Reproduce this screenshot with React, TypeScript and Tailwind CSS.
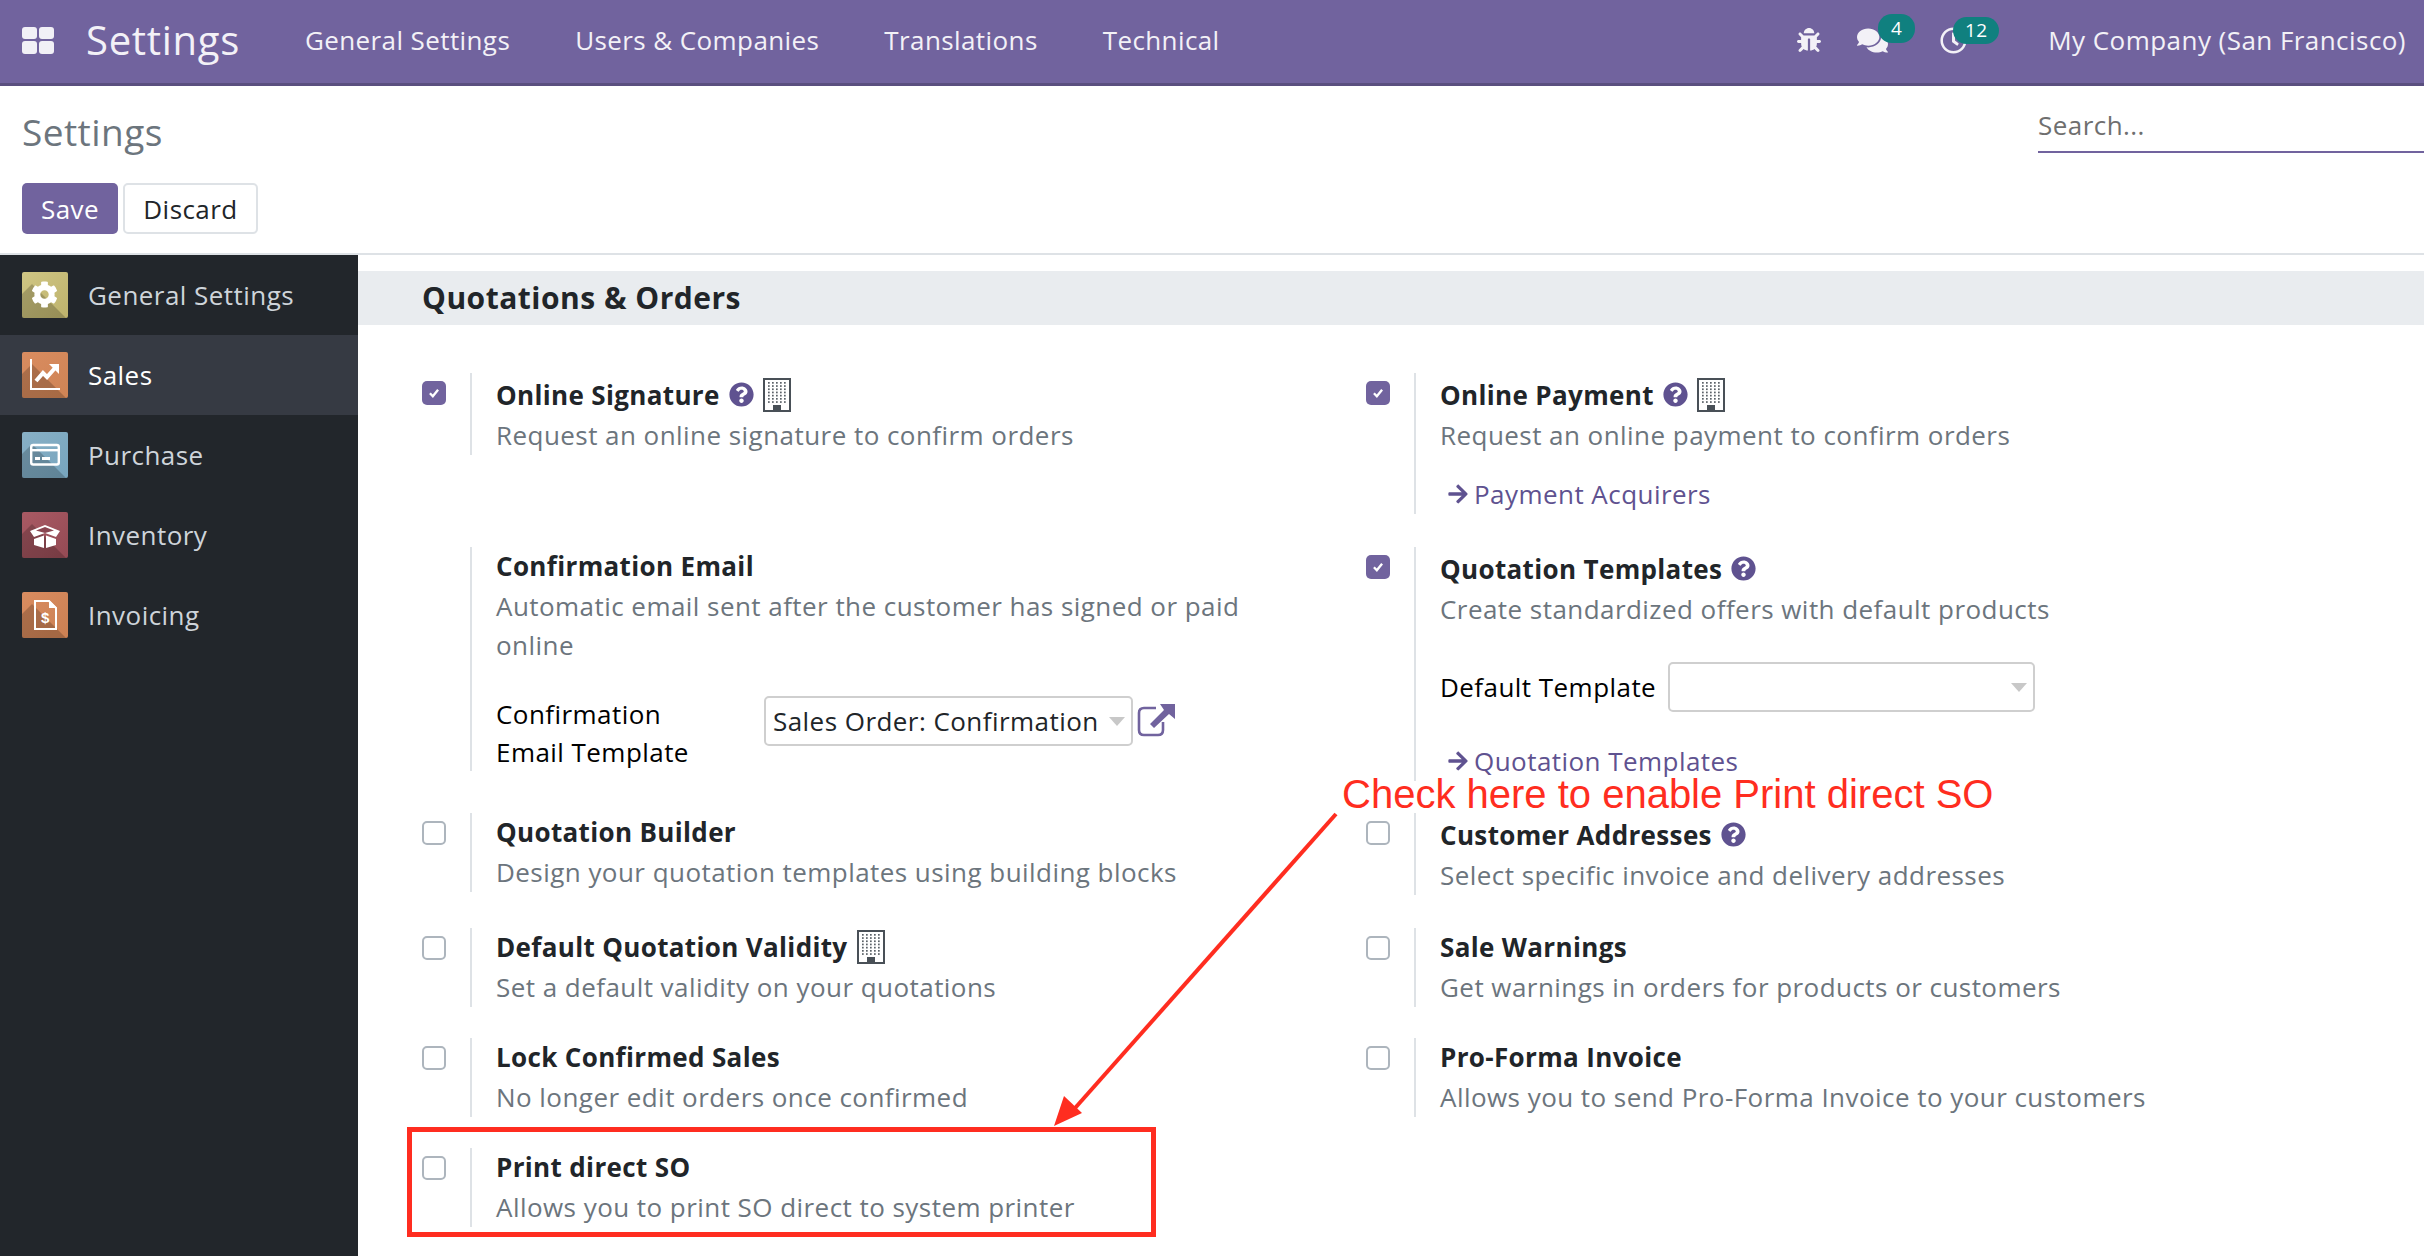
import React from "react";
import { FaBug, FaComments, FaArrowRight, FaQuestionCircle, FaRegClock, FaCog } from "react-icons/fa";

const FONT = "font-['Open_Sans','Noto_Sans',sans-serif]";

function Building() {
  const dots: React.ReactNode[] = [];
  for (let r = 0; r < 7; r++) for (let c = 0; c < 5; c++) dots.push(<rect key={r + "-" + c} x={5 + c * 4} y={4 + r * 3.2} width="1.7" height="1.7" fill="#5b6268" />);
  return (
    <svg width="28" height="34" viewBox="0 0 28 34" className="w-[28px] h-[34px] shrink-0">
      <rect x="1" y="1" width="26" height="32" fill="none" stroke="#495057" strokeWidth="2" />
      {dots}
      <rect x="10" y="27" width="8" height="6" fill="#495057" />
    </svg>
  );
}

function Check({ on }: { on?: boolean }) {
  return on ? (
    <span className="flex w-[24px] h-[24px] rounded-[5px] bg-[#71639e] items-center justify-center">
      <svg width="14" height="14" viewBox="0 0 12 12"><path d="M2.5 6.2 L5 8.8 L9.5 3.2" fill="none" stroke="white" strokeWidth="2" /></svg>
    </span>
  ) : (
    <span className="block w-[24px] h-[24px] rounded-[5px] bg-white border-2 border-[#adb5bd]" />
  );
}

function Help() {
  return <FaQuestionCircle className="text-[#5f5290] w-[25px] h-[25px] shrink-0" />;
}

type SettingProps = { check?: "on" | "off"; title: string; desc?: string; help?: boolean; building?: boolean; children?: React.ReactNode; className?: string };

function Setting({ check, title, desc, help, building, children, className = "" }: SettingProps) {
  return (
    <div className={`flex items-start ${className}`}>
      <div className="w-[48px] shrink-0 pt-[8px]">{check && <Check on={check === "on"} />}</div>
      <div className="w-[800px] border-l-2 border-[#dee2e6] pl-[24px]">
        <div className={`flex items-center gap-[9px] ${help ? "h-[43px]" : "h-[38px]"} font-bold text-[#212529] tracking-[0.35px]`}>
          <span className="whitespace-nowrap">{title}</span>
          {help && <Help />}
          {building && <Building />}
        </div>
        {desc && <div className={`text-[#6c757d] leading-[39px] w-[780px] ${help ? "" : "mt-[2px]"}`}>{desc}</div>}
        {children}
      </div>
    </div>
  );
}

function Tile({ id, c1, c2, children }: { id: string; c1: string; c2: string; children: React.ReactNode }) {
  return (
    <svg viewBox="0 0 46 46" className="w-[46px] h-[46px] shrink-0">
      <defs>
        <linearGradient id={id} x1="0" y1="0" x2="1" y2="1"><stop offset="0" stopColor={c1} /><stop offset="1" stopColor={c2} /></linearGradient>
      </defs>
      <rect width="46" height="46" rx="2" fill={`url(#${id})`} />
      <path d="M10 12 L44 46 L2 46 A2 2 0 0 1 0 44 L0 22 Z" fill="black" opacity="0.2" />
      {children}
    </svg>
  );
}

const sideItems: { label: string; icon: React.ReactNode; active?: boolean }[] = [
  { label: "General Settings", icon: <Tile id="t1" c1="#d0c684" c2="#bdb26c"><foreignObject x="9" y="9" width="27" height="27"><FaCog className="text-white w-[27px] h-[27px]" /></foreignObject></Tile> },
  { label: "Sales", active: true, icon: <Tile id="t2" c1="#d98c60" c2="#cf8455"><path d="M9 7 V37 H38" fill="none" stroke="white" strokeWidth="2" /><path d="M14 29 L21 21 L25 25 L33 16" fill="none" stroke="white" strokeWidth="4" /><path d="M27 12 H37 V22 Z" fill="white" /></Tile> },
  { label: "Purchase", icon: <Tile id="t3" c1="#88b0c6" c2="#77a5be"><rect x="9.2" y="13" width="27.6" height="19.5" rx="2" fill="none" stroke="white" strokeWidth="2.4" /><rect x="9" y="17" width="28" height="2.4" fill="white" /><rect x="13" y="25" width="5" height="3" fill="white" /><rect x="20" y="25" width="8" height="3" fill="white" /></Tile> },
  { label: "Inventory", icon: <Tile id="t4" c1="#a95a64" c2="#944a54"><path d="M8 19 L23 13 L38 19 L34 25 L23 21 L12 25 Z" fill="white" /><path d="M23 15 L32 18.5 L23 21 L14 18.5 Z" fill="#8a4550" /><path d="M12 27 L22 23.5 V36 L12 33 Z M34 27 L24 23.5 V36 L34 33 Z" fill="white" /></Tile> },
  { label: "Invoicing", icon: <Tile id="t5" c1="#d98c60" c2="#cb8053"><path d="M13 9 H27 L34 16 V37 H13 Z" fill="none" stroke="white" strokeWidth="2" /><path d="M27 8 L35 16 H27 Z" fill="white" /><text x="23.5" y="31" fontSize="15" fontWeight="bold" textAnchor="middle" fill="white" fontFamily="Liberation Sans">$</text></Tile> },
];

function SelectBox({ w, text }: { w: string; text?: string }) {
  return (
    <div className={`${w} h-[50px] rounded-[5px] border-2 border-[#cfcfcf] flex items-center pl-[7px] pr-[6px] bg-white shrink-0`}>
      <span className="flex-1 whitespace-nowrap overflow-hidden text-[#212529]">{text}</span>
      <span className="w-0 h-0 border-l-[8px] border-r-[8px] border-t-[9px] border-l-transparent border-r-transparent border-t-[#c8c8c8]" />
    </div>
  );
}

function Link({ children }: { children: string }) {
  return (
    <div className="flex items-center text-[#5f5290] pl-[7px] gap-[5px] h-[40px]">
      <FaArrowRight className="w-[22px] h-[22px] shrink-0" />
      <span>{children}</span>
    </div>
  );
}

export default function App() {
  return (
    <div className={`relative w-[2424px] h-[1256px] overflow-hidden bg-white ${FONT} text-[26px] tracking-[0.45px] leading-[38px]`}>
      {/* navbar */}
      <header className="h-[86px] bg-[#71639e] border-b-[3px] border-[#5a4f7f] flex items-center pb-[3px] text-[#f3f1f7]">
        <div className="grid grid-cols-2 gap-[2px] w-[32px] h-[27px] ml-[22px] mr-[32px]">
          <span className="bg-[#f1f0f6] rounded-[3px]" /><span className="bg-[#f1f0f6] rounded-[3px]" /><span className="bg-[#f1f0f6] rounded-[3px]" /><span className="bg-[#f1f0f6] rounded-[3px]" />
        </div>
        <span className="text-[40px] mr-[65px] tracking-[0.7px]">Settings</span>
        <nav className="flex gap-[65px] tracking-[0.4px]">
          <span>General Settings</span><span>Users &amp; Companies</span><span>Translations</span><span>Technical</span>
        </nav>
        <div className="ml-auto flex items-center">
          <FaBug className="w-[24px] h-[24px] mr-[36px]" />
          <div className="relative mr-[52px]">
            <FaComments className="w-[31px] h-[31px]" />
            <span className="absolute -top-[11px] left-[21px] h-[29px] w-[37px] rounded-[14px] bg-[#10807f] text-white text-[19px] leading-[29px] text-center">4</span>
          </div>
          <div className="relative mr-[81px]">
            <FaRegClock className="w-[27px] h-[27px]" />
            <span className="absolute -top-[10px] left-[13px] h-[27px] w-[46px] rounded-[14px] bg-[#10807f] text-white text-[19px] leading-[27px] text-center">12</span>
          </div>
          <span className="pr-[18px]">My Company (San Francisco)</span>
        </div>
      </header>
      {/* control panel */}
      <div className="h-[169px] border-b-2 border-[#dee2e6] relative px-[22px] pt-[19px]">
        <div className="text-[37px] leading-[54px] text-[#6c757d]">Settings</div>
        <div className="flex gap-[5px] mt-[24px]">
          <button className="h-[51px] w-[96px] rounded-[5px] bg-[#71639e] text-white">Save</button>
          <button className="h-[51px] w-[135px] rounded-[5px] bg-white border-2 border-[#dee2e6] text-[#212529]">Discard</button>
        </div>
        <div className="absolute left-[2038px] right-0 top-[20px] h-[47px] border-b-2 border-[#71639e] text-[#6f6f6f] leading-[38px]">Search...</div>
      </div>
      {/* body */}
      <div className="flex h-[1001px]">
        <aside className="w-[358px] shrink-0 bg-[#22262b]">
          {sideItems.map((it) => (
            <div key={it.label} className={`h-[80px] flex items-center gap-[20px] pl-[22px] ${it.active ? "bg-[#363a43] text-white" : "text-[#ced4da]"}`}>
              {it.icon}
              <span>{it.label}</span>
            </div>
          ))}
        </aside>
        <main className="flex-1 min-w-0 pt-[16px]">
          <div className="h-[54px] bg-[#e9ecef] pl-[64px] flex items-center font-bold text-[30px] tracking-[0.5px] text-[#212529]">Quotations &amp; Orders</div>
          <div className="pl-[64px] pt-[48px] grid grid-cols-[944px_944px] grid-rows-[174px_266px_114px_111px_110px]">
            <Setting check="on" title="Online Signature" help building desc="Request an online signature to confirm orders" />
            <Setting check="on" title="Online Payment" help building desc="Request an online payment to confirm orders">
              <div className="mt-[19px]"><Link>Payment Acquirers</Link></div>
            </Setting>
            <Setting title="Confirmation Email" desc="Automatic email sent after the customer has signed or paid online">
              <div className="flex mt-[30px]">
                <div className="w-[268px] shrink-0">Confirmation<br />Email Template</div>
                <div className="flex items-start gap-[3px] mt-[1px]">
                  <SelectBox w="w-[369px]" text="Sales Order: Confirmation" />
                  <svg width="42" height="36" viewBox="0 0 42 36" className="mt-[6px] shrink-0"><path d="M20 6 H8 Q3 6 3 11 V28 Q3 33 8 33 H22 Q27 33 27 28 V20" fill="none" stroke="#71639e" strokeWidth="2.6" /><path d="M24 2 H39 V17 L33 12 L18 26 L14 22 L28 8 Z" fill="#71639e" /></svg>
                </div>
              </div>
            </Setting>
            <Setting check="on" title="Quotation Templates" help desc="Create standardized offers with default products">
              <div className="flex items-center gap-[12px] mt-[33px]">
                <span className="whitespace-nowrap">Default Template</span>
                <SelectBox w="w-[367px]" />
              </div>
              <div className="mt-[29px]"><Link>Quotation Templates</Link></div>
            </Setting>
            <Setting check="off" title="Quotation Builder" desc="Design your quotation templates using building blocks" />
            <Setting check="off" title="Customer Addresses" help desc="Select specific invoice and delivery addresses" />
            <Setting check="off" title="Default Quotation Validity" building desc="Set a default validity on your quotations" className="mt-[1px]" />
            <Setting check="off" title="Sale Warnings" desc="Get warnings in orders for products or customers" className="mt-[1px]" />
            <Setting check="off" title="Lock Confirmed Sales" desc="No longer edit orders once confirmed" />
            <Setting check="off" title="Pro-Forma Invoice" desc="Allows you to send Pro-Forma Invoice to your customers" />
            <Setting check="off" title="Print direct SO" desc="Allows you to print SO direct to system printer" />
          </div>
        </main>
      </div>
      {/* annotation */}
      <div className="absolute left-[407px] top-[1127px] w-[749px] h-[110px] border-[5px] border-[#ff2d20]" />
      <div className="absolute left-[1342px] top-[769px] text-[#ff2d20] text-[40px] tracking-normal leading-[50px] whitespace-nowrap font-['Liberation_Sans',sans-serif]">Check here to enable Print direct SO</div>
      <svg className="absolute left-[1040px] top-[800px]" width="310" height="340" viewBox="0 0 310 340">
        <path d="M296 14 L28 316" stroke="#ff2d20" strokeWidth="4" fill="none" />
        <path d="M14 326 L24 296 L42 313 Z" fill="#ff2d20" />
      </svg>
    </div>
  );
}
